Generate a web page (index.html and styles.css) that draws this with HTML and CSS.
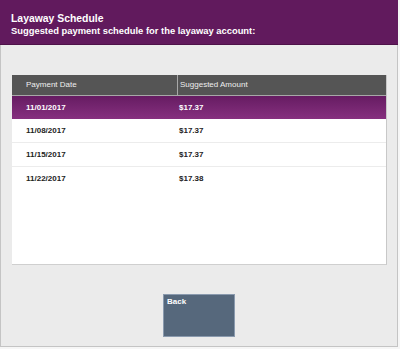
FILE: index.html
```html
<!DOCTYPE html>
<html lang="en">
<head>
    <meta charset="UTF-8">
    <title>Layaway Schedule</title>
    <link rel="stylesheet" href="styles.css">
</head>
<body>
<div class="frame">
    <div class="header">
        <h1>Layaway Schedule</h1>
        <p>Suggested payment schedule for the layaway account:</p>
    </div>
    <div class="content">
        <div class="grid">
            <div class="grid-head">
                <div class="cell date">Payment Date</div>
                <div class="cell amount">Suggested Amount</div>
            </div>
            <div class="row active">
                <div class="cell date">11/01/2017</div>
                <div class="cell amount">$17.37</div>
            </div>
            <div class="row">
                <div class="cell date">11/08/2017</div>
                <div class="cell amount">$17.37</div>
            </div>
            <div class="row">
                <div class="cell date">11/15/2017</div>
                <div class="cell amount">$17.37</div>
            </div>
            <div class="row">
                <div class="cell date">11/22/2017</div>
                <div class="cell amount">$17.38</div>
            </div>
        </div>
        <div class="buttons">
            <a class="btn" href="#">Back</a>
        </div>
    </div>
</div>
</body>
</html>
```

FILE: styles.css
```css
* {
    margin: 0;
    padding: 0;
    box-sizing: border-box;
}
body {
    background: #f6f6f6;
    font-family: "Liberation Sans", Arial, sans-serif;
}
.frame {
    width: 398px;
    height: 347px;
    background: #ebebeb;
    border: 1px solid #c4c4c4;
    border-top: none;
    display: flex;
    flex-direction: column;
}
.header {
    height: 45px;
    background: #611a5d;
    border-bottom: 1px solid #4e1249;
    color: #fff;
    padding: 12px 0 0 11px;
    margin: 0 -1px;
}
.header h1 {
    font-size: 10.4px;
    line-height: 13px;
    font-weight: bold;
}
.header p {
    font-size: 9.4px;
    line-height: 11px;
    font-weight: bold;
}
.content {
    flex: 1;
    display: flex;
    flex-direction: column;
    padding: 30px 10px 0 11px;
}
.grid {
    height: 190px;
    background: #fff;
    border-right: 1px solid #c8c8c8;
    border-bottom: 1px solid #cfcfcf;
}
.grid-head {
    display: flex;
    height: 21px;
    background: #555555;
    border-bottom: 1px solid #a8a8a8;
    color: #eee;
    font-size: 8px;
}
.grid-head .cell {
    line-height: 20px;
}
.grid-head .date {
    border-right: 1px solid #a8a8a8;
}
.cell.date {
    width: 166px;
    padding-left: 14px;
}
.cell.amount {
    flex: 1;
    padding-left: 2px;
}
.row {
    display: flex;
    height: 24px;
    border-bottom: 1px solid #ececec;
    font-size: 8px;
    font-weight: bold;
    color: #222;
}
.row .cell {
    line-height: 23px;
}
.row .amount {
    padding-left: 1px;
}
.row.active {
    height: 23px;
    background: linear-gradient(#661c62, #86307f);
    color: #fff;
    border-bottom: none;
}
.row:last-child {
    border-bottom: none;
}
.buttons {
    display: flex;
    justify-content: center;
    padding-top: 29px;
}
.btn {
    display: block;
    width: 72px;
    height: 43px;
    margin-left: -1px;
    background: #56687c;
    border: 1px solid #8a9aae;
    color: #fff;
    font-size: 8px;
    font-weight: bold;
    text-decoration: none;
    padding: 2px 0 0 3px;
}
```
